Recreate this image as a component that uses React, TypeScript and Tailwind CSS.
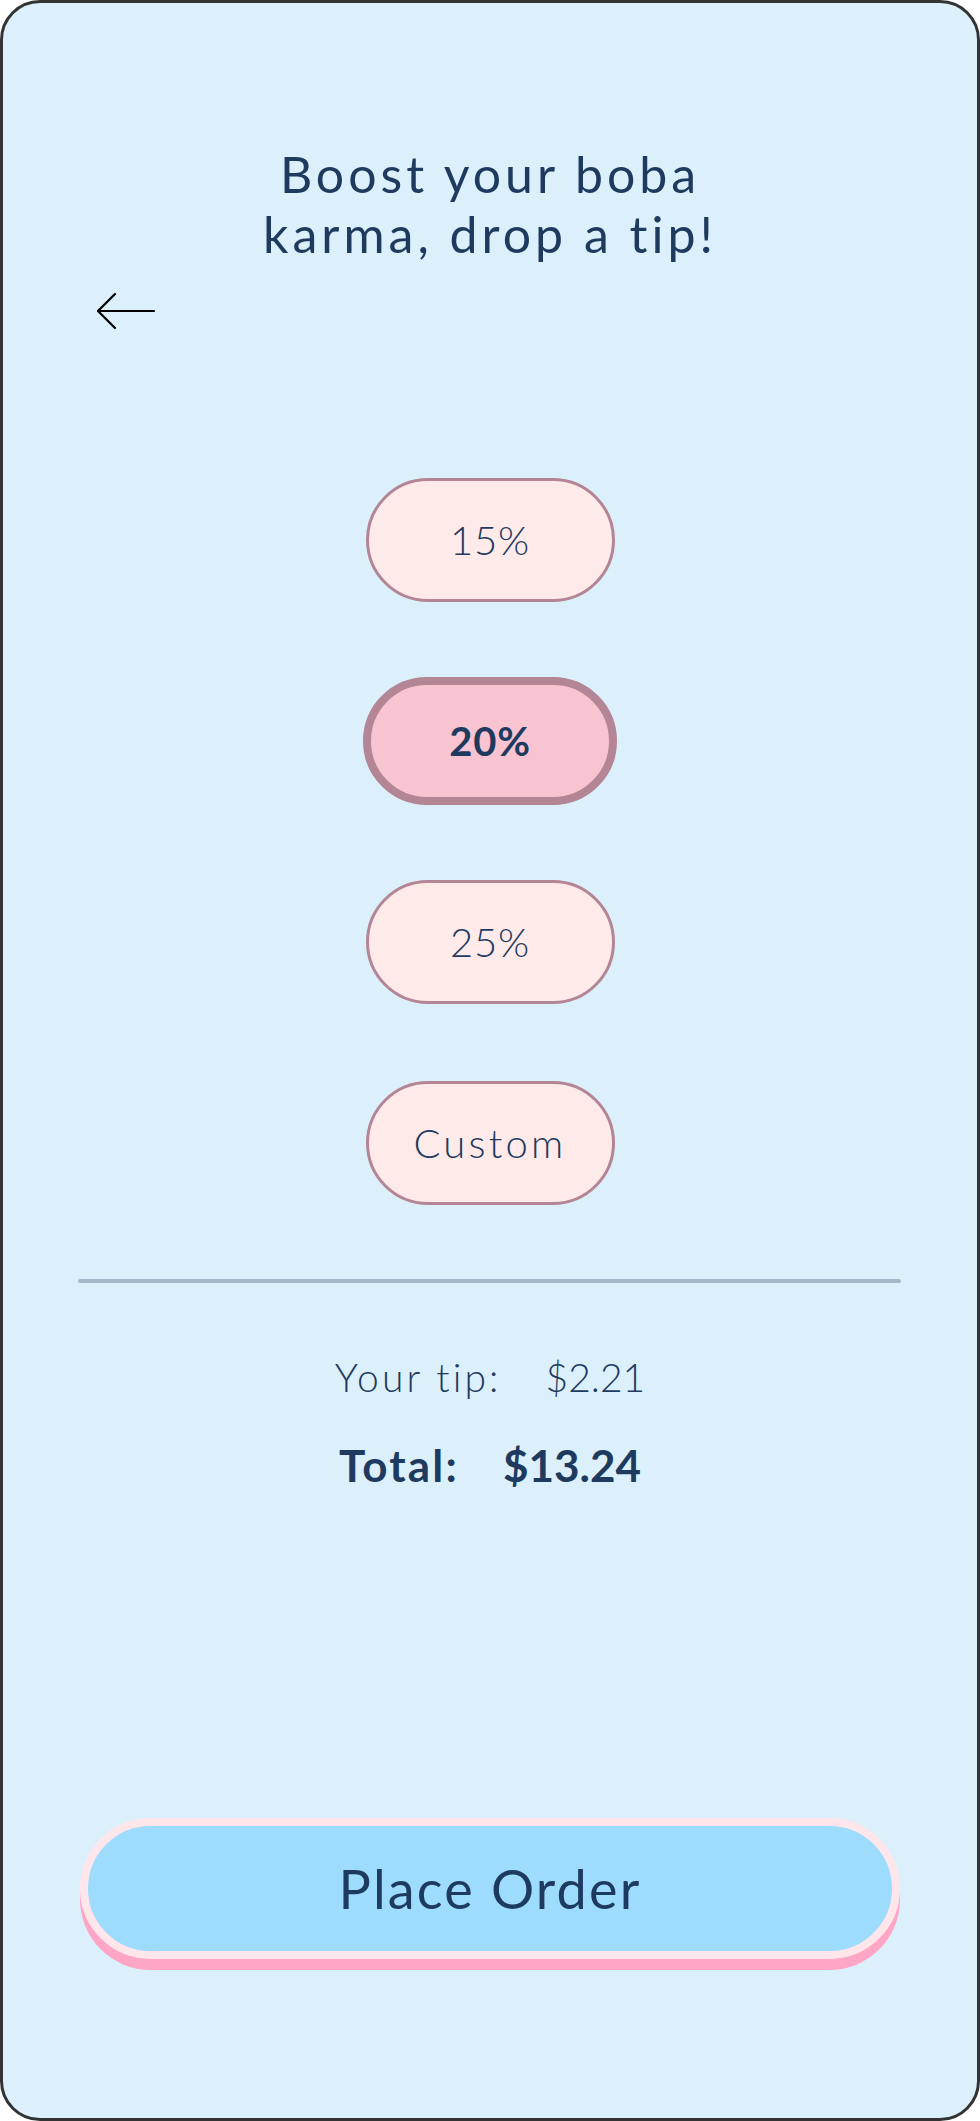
import React, { useState } from 'react';

const tips = ['15%', '20%', '25%', 'Custom'];

function BackArrow() {
  return (
    <svg width="60" height="40" viewBox="0 0 60 40" fill="none" stroke="#000" strokeWidth="2.2" strokeLinecap="round" strokeLinejoin="round">
      <path d="M58 20 H2" />
      <path d="M19 3 L2 20 L19 37" />
    </svg>
  );
}

export default function App() {
  const [selected, setSelected] = useState('20%');

  return (
    <div className="w-[980px] h-[2121px] bg-white" style={{ fontFamily: 'Lato, "Noto Sans", sans-serif' }}>
      <div className="h-full border-[3px] border-[#333333] rounded-[40px] bg-[#dcf0fb] flex flex-col text-[#1e3a5f]">
        {/* Header */}
        <h1 className="pt-[141px] text-center text-[50px] leading-[60px] tracking-[0.08em] font-normal">
          Boost your boba
          <br />
          karma, drop a tip!
        </h1>

        <button className="mt-[27px] ml-[93px] w-[60px] h-[40px] flex items-center">
          <BackArrow />
        </button>

        {/* Tip options */}
        <div className="mt-[147px] flex flex-col items-center gap-[77px]">
          {tips.map((tip) => {
            const active = tip === selected;
            const spacing = tip === 'Custom' ? 'tracking-[0.08em]' : 'tracking-[0.02em]';
            return (
              <div key={tip} className="h-[124px] flex items-center justify-center">
                <button
                  onClick={() => setSelected(tip)}
                  className={
                    (active
                      ? 'w-[254px] h-[128px] rounded-full border-[8px] border-[#b38595] bg-[#f9c4d2] text-[40px] font-bold'
                      : 'w-[249px] h-[124px] rounded-full border-[3px] border-[#b38595] bg-[#ffeaea] text-[40px] font-light') +
                    ' ' +
                    spacing
                  }
                >
                  {tip}
                </button>
              </div>
            );
          })}
        </div>

        <div className="mt-[74px] ml-[75px] w-[823px] h-[4px] rounded-full bg-[#a3b8cb]" />

        {/* Summary */}
        <div className="mt-[70px] flex justify-center gap-[44px] text-[39px] leading-[48px] font-light">
          <span className="tracking-[0.08em]">Your tip:</span>
          <span>$2.21</span>
        </div>
        <div className="mt-[38px] flex justify-center gap-[44px] text-[44px] leading-[52px] font-bold">
          <span className="tracking-[0.05em]">Total:</span>
          <span>$13.24</span>
        </div>

        <div className="mt-[327px] flex justify-center">
          <button className="w-[820px] h-[141px] rounded-full border-[8px] border-[#ffe6ea] bg-[#9ddcfd] shadow-[0_11px_0_#ffa6c6] text-[54px] font-normal tracking-[0.04em]">
            Place Order
          </button>
        </div>
      </div>
    </div>
  );
}
